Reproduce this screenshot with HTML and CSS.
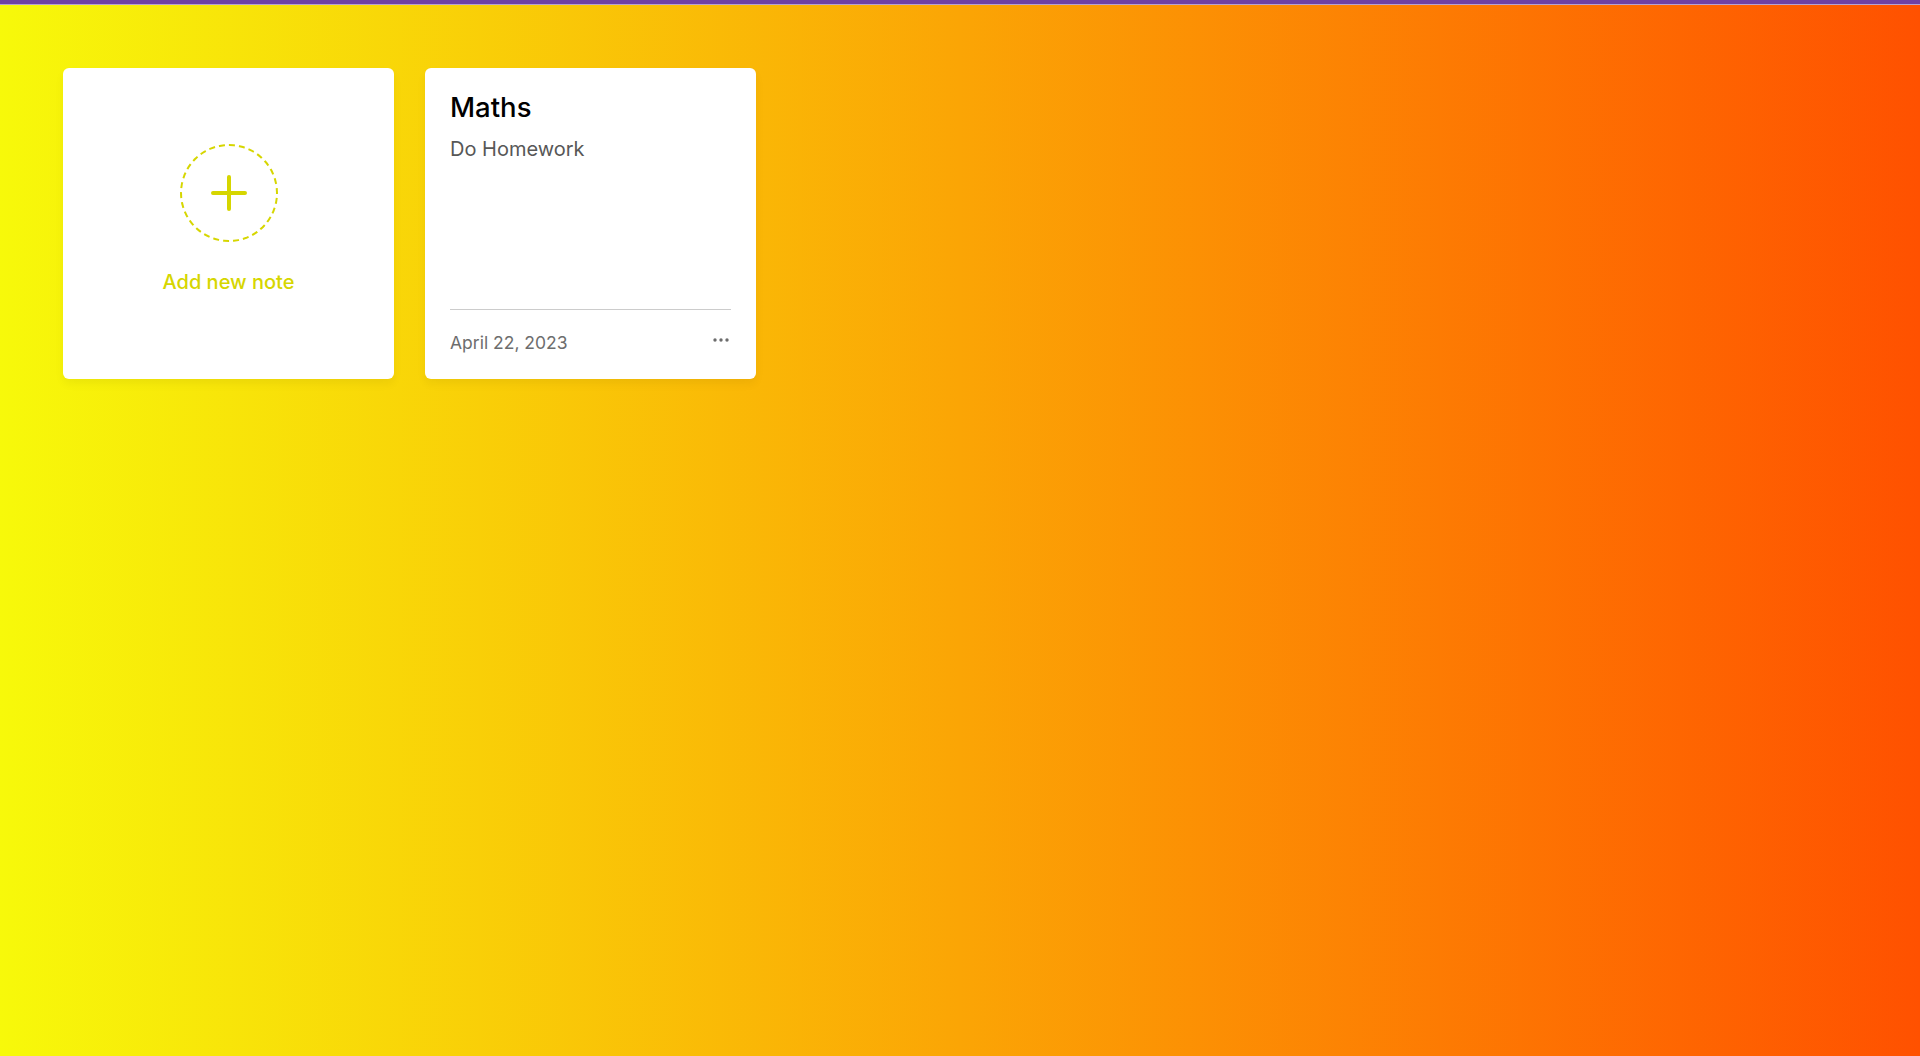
FILE: index.html
```html
<!DOCTYPE html>
<html lang="en">
<head>
<meta charset="utf-8">
<title>Notes App</title>
<link rel="stylesheet" href="styles.css">
</head>
<body>
<div class="topbar"></div>
<ul class="wrapper">
  <li class="card add-box">
    <div class="icon">
      <svg width="36" height="36" viewBox="0 0 36 36" aria-hidden="true">
        <path d="M18 2 V34 M2 18 H34" stroke="#d6d600" stroke-width="4" stroke-linecap="round" fill="none"/>
      </svg>
    </div>
    <p class="add-label">Add new note</p>
  </li>
  <li class="card note">
    <div class="details">
      <p class="title">Maths</p>
      <span class="desc">Do Homework</span>
    </div>
    <div class="bottom-content">
      <span class="date">April 22, 2023</span>
      <div class="settings">
        <svg width="16" height="4" viewBox="0 0 16 4" aria-hidden="true">
          <circle cx="2" cy="2" r="1.7" fill="#6d6d6d"/>
          <circle cx="8" cy="2" r="1.7" fill="#6d6d6d"/>
          <circle cx="14" cy="2" r="1.7" fill="#6d6d6d"/>
        </svg>
      </div>
    </div>
  </li>
</ul>
</body>
</html>
```
FILE: styles.css
```css
* {
  box-sizing: border-box;
  margin: 0;
  padding: 0;
}
html, body {
  min-height: 100%;
}
body {
  min-height: 100vh;
  font-family: "Inter", "Noto Sans", sans-serif;
  background: linear-gradient(to right, #f7f90a, #ff5100);
}
.topbar {
  height: 4px;
  background: #6f41a3;
  border-bottom: 1px solid #b8a2cf;
  box-sizing: content-box;
}
.wrapper {
  margin: 63px;
  display: grid;
  gap: 31px;
  grid-template-columns: repeat(auto-fill, 331px);
  list-style: none;
}
.card {
  height: 311px;
  background: #fff;
  border-radius: 6px;
  padding: 19px 25px 25px;
  box-shadow: 0 5px 10px rgba(0, 0, 0, 0.05);
}
.add-box {
  display: flex;
  flex-direction: column;
  align-items: center;
  justify-content: center;
  padding-bottom: 29px;
}
.add-box .icon {
  width: 98px;
  height: 98px;
  border-radius: 50%;
  border: 2.5px dashed #d6d600;
  display: flex;
  align-items: center;
  justify-content: center;
}
.add-label {
  margin-top: 28px;
  color: #d6d600;
  font-size: 20px;
  font-weight: 500;
}
.note {
  display: flex;
  flex-direction: column;
  justify-content: space-between;
  padding-bottom: 23px;
}
.title {
  font-size: 27.5px;
  font-weight: 500;
  color: #000;
  line-height: 1.5;
}
.desc {
  display: block;
  margin-top: 6px;
  font-size: 20px;
  color: #575757;
  line-height: 1.5;
}
.bottom-content {
  display: flex;
  align-items: center;
  justify-content: space-between;
  padding-top: 20px;
  border-top: 1px solid #ccc;
}
.date {
  font-size: 17.5px;
  color: #6d6d6d;
  line-height: 1.5;
}
.settings {
  display: flex;
  align-items: center;
  margin-right: 2px;
  margin-top: -6px;
}
```
